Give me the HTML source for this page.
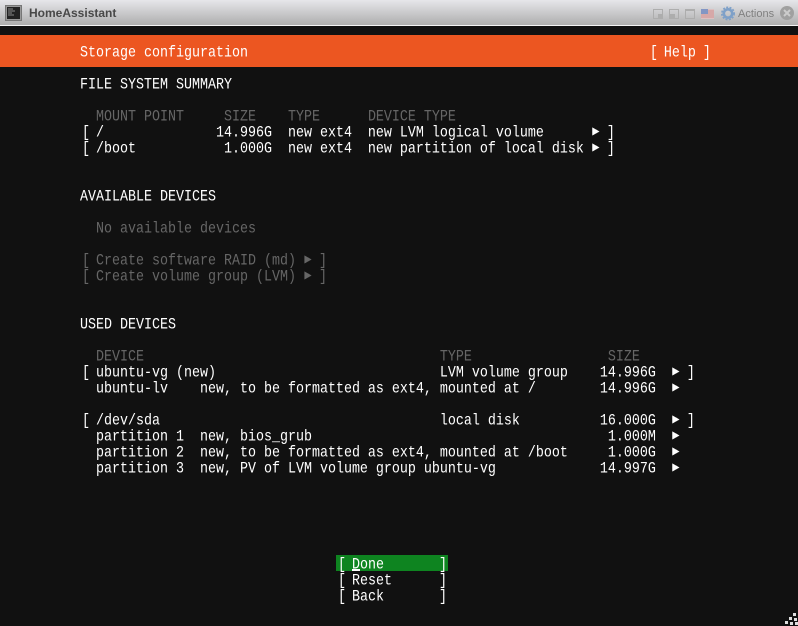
<!DOCTYPE html>
<html>
<head>
<meta charset="utf-8">
<style>
html,body{margin:0;padding:0;width:798px;height:626px;overflow:hidden;background:#111;}
#bar{position:absolute;left:0;top:0;width:798px;height:25px;background:linear-gradient(#e6e6ea,#aeaeae);border-bottom:1px solid #f4f4f4;}
#title{position:absolute;left:29px;top:6px;font:bold 12px/15px "Liberation Sans",sans-serif;color:#484848;}
#act{position:absolute;left:738px;top:7px;font:11px/14px "Liberation Sans",sans-serif;color:#808080;}
#orange{position:absolute;left:0;top:35px;width:798px;height:32px;background:#ec5621;}
#green{position:absolute;left:336px;top:555px;width:112px;height:16px;background:#0e8420;}
#cursor{position:absolute;left:352px;top:569px;width:8px;height:2px;background:#fff;}
pre{position:absolute;left:80px;top:46px;margin:0;font:13.33px/14px "Liberation Mono",monospace;color:#fff;transform:scaleY(1.142857);transform-origin:0 0;}
.d{color:#666;}
.a{display:inline-block;width:8px;height:14px;font:12px/14px "DejaVu Sans Mono",monospace;vertical-align:top;text-align:center;position:relative;top:-3px;}
.l{position:relative;left:2px;}
.r{position:relative;left:-1px;}
svg{position:absolute;}
</style>
</head>
<body>
<div id="bar"></div>
<svg style="left:5px;top:5px" width="17" height="16" viewBox="0 0 17 16"><rect x="0.5" y="0.5" width="16" height="15" fill="#999" stroke="#777"/><rect x="2" y="2" width="13" height="12" fill="#222"/><path d="M3 4h5M3 6h7M3 8h4M3 10h6" stroke="#888"/></svg>
<div id="title">HomeAssistant</div>
<svg style="left:650px;top:5px" width="148" height="18" viewBox="0 0 148 18">
<g fill="none" stroke="#adadad"><rect x="3.5" y="4.5" width="9" height="9"/><rect x="19.5" y="4.5" width="9" height="9"/><rect x="35.5" y="4.5" width="9" height="9"/></g>
<rect x="8" y="9" width="5" height="5" fill="#adadad"/><rect x="20" y="9" width="5" height="5" fill="#adadad"/>
<rect x="36" y="5" width="9" height="1" fill="#adadad"/>
<rect x="51" y="4" width="13" height="10" fill="#dcc0c0"/><path d="M51 6h13M51 8h13M51 10h13M51 12h13" stroke="#d09090" stroke-width="1"/><rect x="51" y="4" width="7" height="5" fill="#8296c4"/>
<circle cx="78" cy="8.5" r="4.2" fill="none" stroke="#7ea0c8" stroke-width="2.6"/><circle cx="78" cy="8.5" r="6.2" fill="none" stroke="#7ea0c8" stroke-width="1.6" stroke-dasharray="2 1.4"/>
</svg>
<div id="act">Actions</div>
<svg style="left:779px;top:5px" width="17" height="17" viewBox="0 0 17 17"><circle cx="8" cy="8" r="7" fill="#a0a0a0"/><path d="M5 5l6 6M11 5l-6 6" stroke="#ccc" stroke-width="2"/></svg>
<div id="orange"></div>
<div id="green"></div>
<pre>Storage configuration                                                  <span class="l">[</span> Help <span class="r">]</span>

FILE SYSTEM SUMMARY

  <span class="d">MOUNT POINT     SIZE    TYPE      DEVICE TYPE</span>
<span class="l">[</span> /              14.996G  new ext4  new LVM logical volume      <span class="a">▶</span> <span class="r">]</span>
<span class="l">[</span> /boot           1.000G  new ext4  new partition of local disk <span class="a">▶</span> <span class="r">]</span>


AVAILABLE DEVICES

  <span class="d">No available devices</span>

<span class="d"><span class="l">[</span> Create software RAID (md) <span class="a">▶</span> <span class="r">]</span></span>
<span class="d"><span class="l">[</span> Create volume group (LVM) <span class="a">▶</span> <span class="r">]</span></span>


USED DEVICES

  <span class="d">DEVICE                                     TYPE                 SIZE</span>
<span class="l">[</span> ubuntu-vg (new)                            LVM volume group    14.996G  <span class="a">▶</span> <span class="r">]</span>
  ubuntu-lv    new, to be formatted as ext4, mounted at /        14.996G  <span class="a">▶</span>

<span class="l">[</span> /dev/sda                                   local disk          16.000G  <span class="a">▶</span> <span class="r">]</span>
  partition 1  new, bios_grub                                     1.000M  <span class="a">▶</span>
  partition 2  new, to be formatted as ext4, mounted at /boot     1.000G  <span class="a">▶</span>
  partition 3  new, PV of LVM volume group ubuntu-vg             14.997G  <span class="a">▶</span>





                                <span class="l">[</span> Done       <span class="r">]</span>
                                <span class="l">[</span> Reset      <span class="r">]</span>
                                <span class="l">[</span> Back       <span class="r">]</span></pre>
<div id="cursor"></div>
<svg style="left:785px;top:612px" width="13" height="14" viewBox="0 0 13 14" fill="#ddd"><rect x="8" y="1" width="3" height="3"/><rect x="4" y="5" width="3" height="3"/><rect x="9" y="6" width="3" height="3"/><rect x="0" y="9" width="3" height="3"/><rect x="5" y="10" width="3" height="3"/><rect x="10" y="10" width="3" height="3"/></svg>
</body>
</html>
